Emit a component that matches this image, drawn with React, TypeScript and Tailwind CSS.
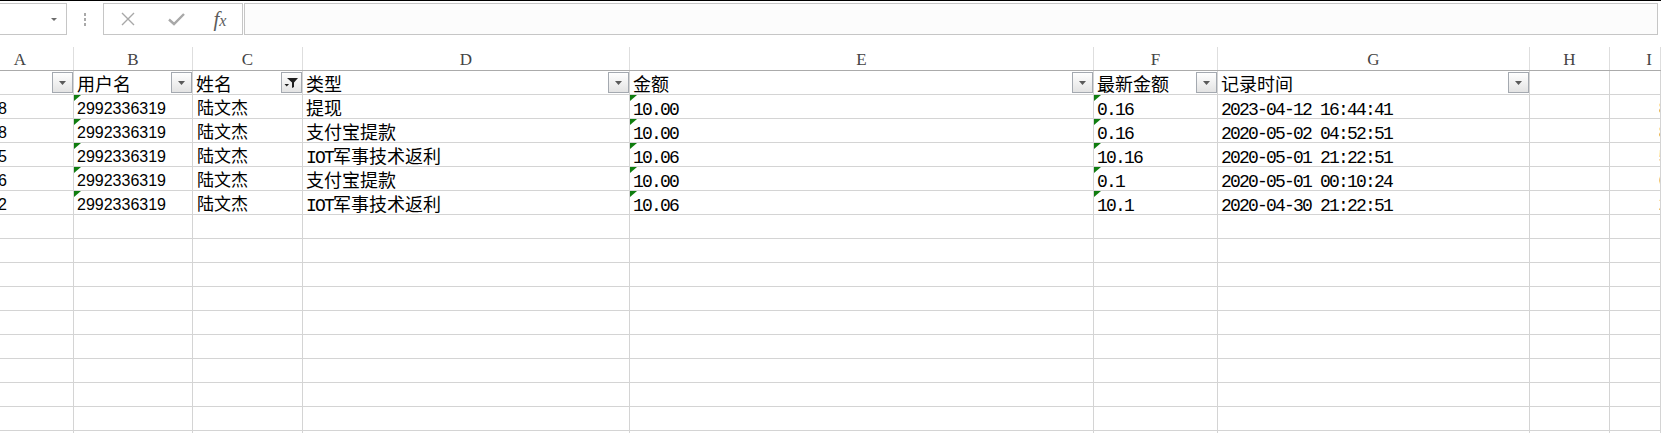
import React from "react";

// column widths include the right grid line
const COLS = [
  { id: "A", w: "w-[74px]" },
  { id: "B", w: "w-[119px]" },
  { id: "C", w: "w-[110px]" },
  { id: "D", w: "w-[327px]" },
  { id: "E", w: "w-[464px]" },
  { id: "F", w: "w-[124px]" },
  { id: "G", w: "w-[312px]" },
  { id: "H", w: "w-[80px]" },
  { id: "I", w: "flex-1" },
];

const mono =
  "font-['Liberation_Mono','Noto_Sans_CJK_SC',monospace] text-[18px] leading-[18px] tracking-[-1.8px] pt-[6px] pl-[3px]";
const monoInline = "font-['Liberation_Mono',monospace] tracking-[-1.8px]";
const cjk = "font-['Noto_Sans_CJK_SC',sans-serif] text-[18px] leading-[18px] pt-[3px] pl-[3px]";
const sans = "font-['Liberation_Sans','Noto_Sans_CJK_SC',sans-serif] text-[16px] leading-[18px] pt-[5px] pl-[3px]";
const name = "font-['Noto_Sans_CJK_SC',sans-serif] text-[17px] leading-[18px] pt-[3px] pl-[4px]";

const HEADERS = ["", "用户名", "姓名", "类型", "金额", "最新金额", "记录时间"];

interface Record {
  a: string;
  type: string;
  amount: string;
  latest: string;
  time: string;
}

const RECORDS: Record[] = [
  { a: "8", type: "提现", amount: "10.00", latest: "0.16", time: "2023-04-12 16:44:41" },
  { a: "8", type: "支付宝提款", amount: "10.00", latest: "0.16", time: "2020-05-02 04:52:51" },
  { a: "5", type: "IOT军事技术返利", amount: "10.06", latest: "10.16", time: "2020-05-01 21:22:51" },
  { a: "6", type: "支付宝提款", amount: "10.00", latest: "0.1", time: "2020-05-01 00:10:24" },
  { a: "2", type: "IOT军事技术返利", amount: "10.06", latest: "10.1", time: "2020-04-30 21:22:51" },
];

function Flag() {
  return (
    <svg className="absolute left-0 top-0" width="7" height="7" viewBox="0 0 7 7">
      <polygon points="0,0 7,0 0,6" fill="#0f7d0f" />
    </svg>
  );
}

function FilterButton({ active }: { active?: boolean }) {
  return (
    <div className="mt-[1px] flex h-[21px] w-[21px] shrink-0 items-center justify-center border border-[#a4a9b0] bg-[linear-gradient(#ffffff,#e3e3e3)]">
      {active ? (
        <svg width="19" height="19" viewBox="0 0 19 19">
          <polygon points="5,5 16,5 12,9.5 12,14 10,15 10,9.5" fill="#1e1e1e" />
          <polygon points="2.5,11 7,11 4.75,13.5" fill="#1e1e1e" />
        </svg>
      ) : (
        <svg width="7" height="4" viewBox="0 0 7 4">
          <polygon points="0,0 7,0 3.5,4" fill="#5a5a5a" />
        </svg>
      )}
    </div>
  );
}

function renderType(t: string) {
  if (t.startsWith("IOT")) {
    return (
      <>
        <span className={monoInline}>IOT</span>
        {t.slice(3)}
      </>
    );
  }
  return t;
}

export default function App() {
  const cellBase = "relative h-full shrink-0 overflow-hidden whitespace-nowrap border-r border-[#d4d4d4] text-black";

  return (
    <div className="h-[433px] w-[1661px] overflow-hidden bg-white">
      {/* formula bar */}
      <div className="h-px bg-black" />
      <div className="flex h-[46px] items-start pt-[2px]">
        <div className="flex h-[32px] w-[67px] items-center justify-end border-y border-r border-[#c6c6c6] pr-[9px]">
          <svg width="6" height="3" viewBox="0 0 6 3">
            <polygon points="0,0 6,0 3,3" fill="#6b6b6b" />
          </svg>
        </div>
        <div className="flex h-[32px] w-[36px] flex-col items-center justify-center gap-[2px]">
          <div className="h-[3px] w-[2px] bg-[#a9a9a9]" />
          <div className="h-[3px] w-[2px] bg-[#a9a9a9]" />
          <div className="h-[3px] w-[2px] bg-[#a9a9a9]" />
        </div>
        <div className="flex h-[32px] w-[140px] items-center border border-[#c6c6c6]">
          <div className="flex w-[47px] justify-center">
            <svg width="14" height="14" viewBox="0 0 14 14">
              <path d="M1 1 L13 13 M13 1 L1 13" stroke="#a8a8a8" strokeWidth="1.4" fill="none" />
            </svg>
          </div>
          <div className="flex w-[47px] justify-center pl-[4px]">
            <svg width="17" height="13" viewBox="0 0 17 13">
              <path d="M1 6.5 L6 11 L16 1" stroke="#a8a8a8" strokeWidth="2.4" fill="none" />
            </svg>
          </div>
          <div className="flex w-[44px] justify-center font-['Liberation_Serif',serif] italic text-[#5c5c5c]">
            <span className="text-[21px] leading-[22px]">f</span>
            <span className="mt-[3px] text-[16px] leading-[20px]">x</span>
          </div>
        </div>
        <div className="ml-[1px] mr-[3px] h-[32px] flex-1 border border-[#c6c6c6] bg-[#fcfcfc]" />
      </div>

      {/* column letters */}
      <div className="flex h-[24px] border-b border-[#ababab]">
        {COLS.map((c, i) => (
          <div
            key={c.id}
            className={`${c.w} h-full shrink-0 overflow-hidden border-r border-[#dedede] pt-[2px] font-['Liberation_Serif',serif] text-[17px] leading-[21px] text-[#444]`}
          >
            {i === 0 ? (
              <div className="pr-[33px] text-center">A</div>
            ) : i === 8 ? (
              <div className="w-[78px] text-center">I</div>
            ) : (
              <div className="text-center">{c.id}</div>
            )}
          </div>
        ))}
      </div>

      {/* autofilter header row */}
      <div className="flex h-[24px]">
        {COLS.map((c, i) => (
          <div key={c.id} className={`${cellBase} ${c.w} flex border-b`}>
            {i < 7 && (
              <>
                <div className={`${cjk} flex-1`}>{HEADERS[i]}</div>
                <FilterButton active={i === 2} />
              </>
            )}
          </div>
        ))}
      </div>

      {/* data rows */}
      {RECORDS.map((r, ri) => (
        <div key={ri} className="flex h-[24px]">
          <div className={`${cellBase} w-[74px] border-b`}>
            <div className="ml-[-2px] pt-[5px] font-['Liberation_Sans',sans-serif] text-[16px] leading-[18px]">{r.a}</div>
          </div>
          <div className={`${cellBase} w-[119px] border-b`}>
            <Flag />
            <div className={sans}>2992336319</div>
          </div>
          <div className={`${cellBase} w-[110px] border-b`}>
            <div className={name}>陆文杰</div>
          </div>
          <div className={`${cellBase} w-[327px] border-b`}>
            <div className={cjk}>{renderType(r.type)}</div>
          </div>
          <div className={`${cellBase} w-[464px] border-b`}>
            <Flag />
            <div className={mono}>{r.amount}</div>
          </div>
          <div className={`${cellBase} w-[124px] border-b`}>
            <Flag />
            <div className={mono}>{r.latest}</div>
          </div>
          <div className={`${cellBase} w-[312px] border-b`}>
            <div className={mono}>{r.time}</div>
          </div>
          <div className={`${cellBase} w-[80px] border-b`} />
          <div className={`${cellBase} flex-1 border-b`}>
            <div className="pl-[49px] pt-[5px] font-['Liberation_Sans',sans-serif] text-[16px] leading-[18px]">{r.a}</div>
          </div>
        </div>
      ))}

      {/* empty rows */}
      {Array.from({ length: 10 }).map((_, ri) => (
        <div key={ri} className="flex h-[24px]">
          {COLS.map((c) => (
            <div key={c.id} className={`${cellBase} ${c.w} border-b`} />
          ))}
        </div>
      ))}
    </div>
  );
}
